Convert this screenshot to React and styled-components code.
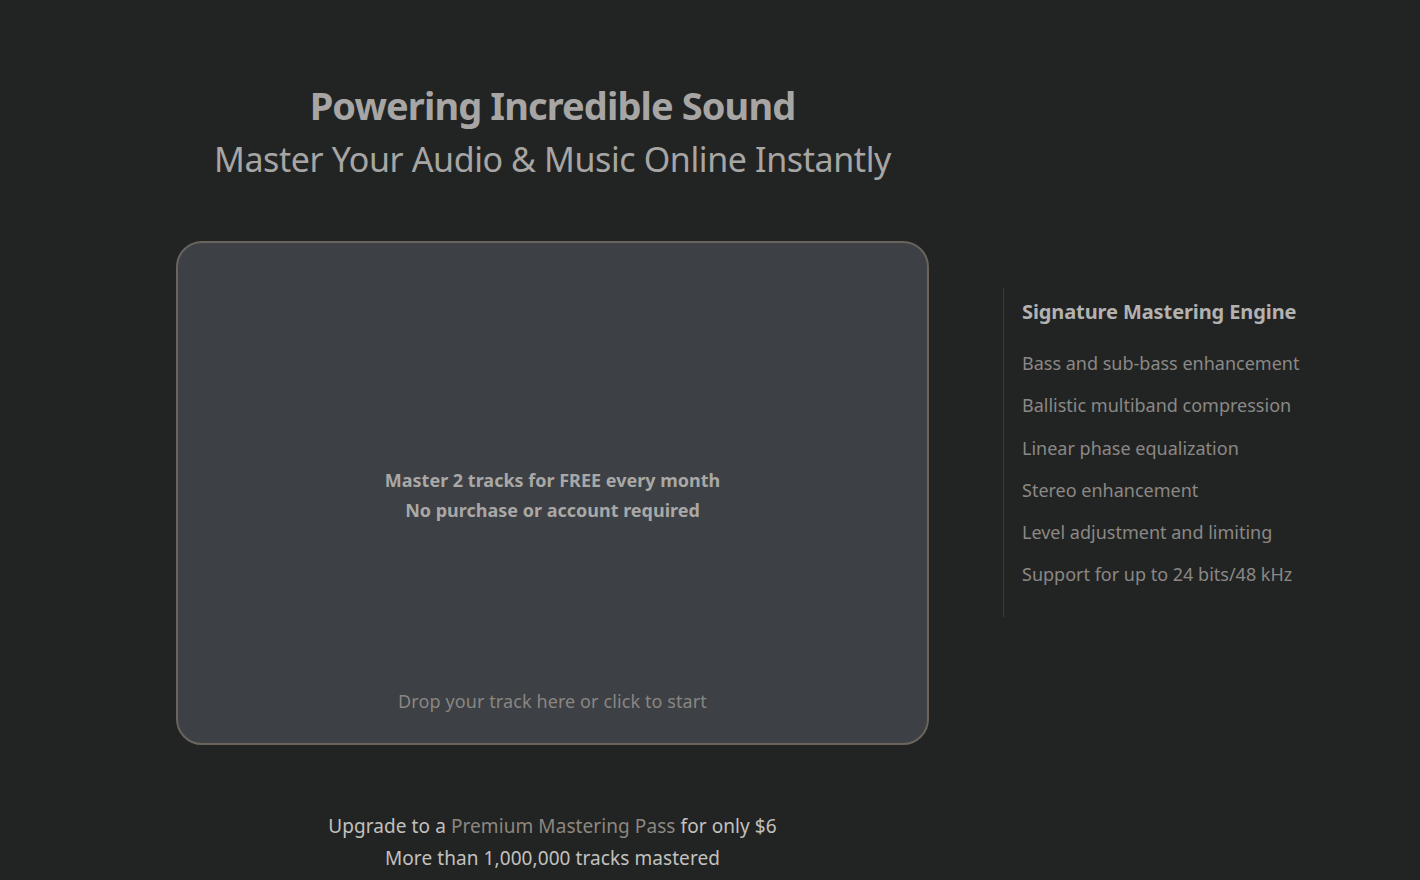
import React from 'react';
import styled, { createGlobalStyle } from 'styled-components';

const GlobalStyle = createGlobalStyle`
  html, body {
    margin: 0;
    padding: 0;
    background: #222424;
  }
  body {
    font-family: 'Noto Sans', 'Open Sans', sans-serif;
    -webkit-font-smoothing: antialiased;
  }
`;

const Page = styled.div`
  width: 1420px;
  height: 880px;
  overflow: hidden;
  background: #222424;
  display: flex;
  padding-left: 176px;
  box-sizing: border-box;
`;

const Main = styled.main`
  width: 753px;
  display: flex;
  flex-direction: column;
  align-items: center;
`;

const Hero = styled.header`
  margin-top: 81px;
  text-align: center;
  color: #a7a6a4;
`;

const Title = styled.h1`
  margin: 0;
  font-size: 38px;
  font-weight: 700;
  line-height: 48px;
  letter-spacing: -0.9px;
`;

const Subtitle = styled.h2`
  margin: 8px 0 0;
  font-size: 34px;
  font-weight: 400;
  line-height: 44px;
  letter-spacing: -0.4px;
`;

const DropZone = styled.div`
  margin-top: 60px;
  width: 753px;
  height: 504px;
  box-sizing: border-box;
  border: 2px solid #6a645d;
  border-radius: 26px;
  background: #3d4044;
  display: flex;
  flex-direction: column;
  align-items: center;
  cursor: pointer;
`;

const Offer = styled.div`
  margin-top: auto;
  padding-top: 58px;
  text-align: center;
  color: #a9a8a6;
  font-size: 18px;
  font-weight: 700;
  line-height: 30px;
  letter-spacing: 0;
`;

const Hint = styled.div`
  margin-top: auto;
  margin-bottom: 30px;
  color: #8a8682;
  font-size: 18px;
  letter-spacing: 0.1px;
`;

const Footer = styled.div`
  margin-top: 65px;
  text-align: center;
  color: #c2c1bf;
  font-size: 19px;
  line-height: 32px;
  letter-spacing: 0.08px;
`;

const Link = styled.a`
  color: #8d877f;
  text-decoration: none;
`;

const Aside = styled.aside`
  margin-top: 288px;
  margin-left: 74px;
  align-self: flex-start;
  border-left: 1px solid #3a3b3b;
  padding: 9px 0 21px 18px;
`;

const AsideTitle = styled.h3`
  margin: 0 0 15px;
  color: #b3b2b0;
  font-size: 20px;
  font-weight: 700;
  line-height: 30px;
  letter-spacing: -0.1px;
`;

const FeatureList = styled.ul`
  list-style: none;
  margin: 0;
  padding: 0;
`;

const Feature = styled.li`
  color: #8b8885;
  font-size: 18px;
  line-height: 42.3px;
  letter-spacing: 0;
`;

const features = [
  'Bass and sub-bass enhancement',
  'Ballistic multiband compression',
  'Linear phase equalization',
  'Stereo enhancement',
  'Level adjustment and limiting',
  'Support for up to 24 bits/48 kHz',
];

export default function App() {
  return (
    <>
      <GlobalStyle />
      <Page>
        <Main>
          <Hero>
            <Title>Powering Incredible Sound</Title>
            <Subtitle>Master Your Audio &amp; Music Online Instantly</Subtitle>
          </Hero>
          <DropZone>
            <Offer>
              Master 2 tracks for FREE every month
              <br />
              No purchase or account required
            </Offer>
            <Hint>Drop your track here or click to start</Hint>
          </DropZone>
          <Footer>
            Upgrade to a <Link href="#">Premium Mastering Pass</Link> for only $6
            <br />
            More than 1,000,000 tracks mastered
          </Footer>
        </Main>
        <Aside>
          <AsideTitle>Signature Mastering Engine</AsideTitle>
          <FeatureList>
            {features.map((f) => (
              <Feature key={f}>{f}</Feature>
            ))}
          </FeatureList>
        </Aside>
      </Page>
    </>
  );
}
